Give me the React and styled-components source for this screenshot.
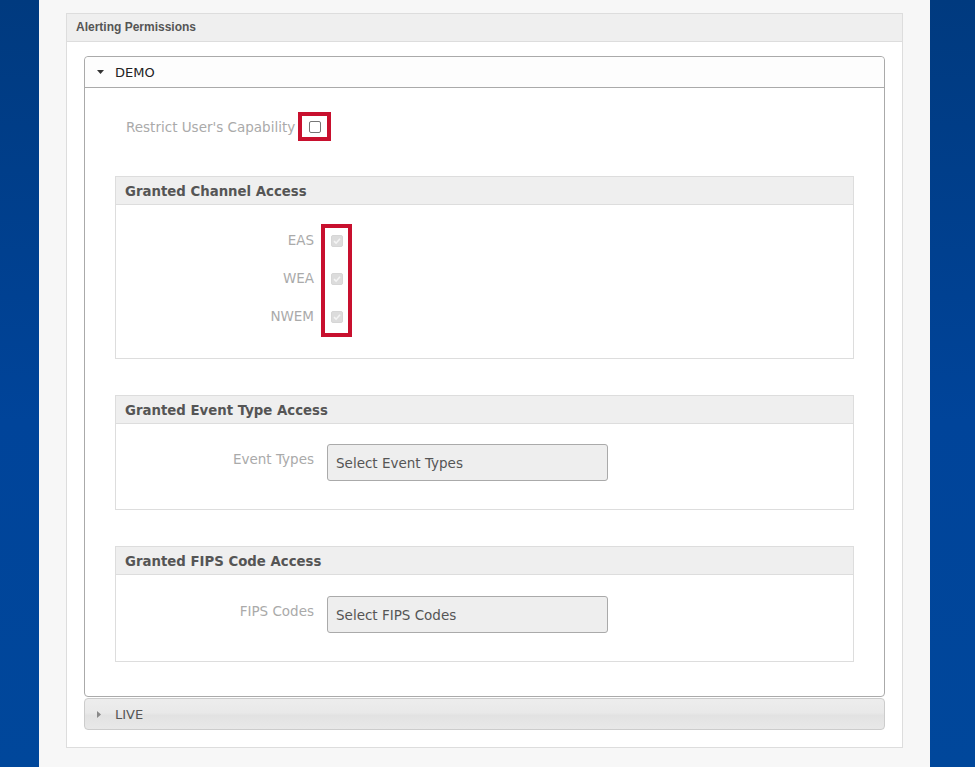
import React from "react";
import styled, { createGlobalStyle } from "styled-components";

const Global = createGlobalStyle`
  html, body { margin: 0; padding: 0; height: 100%; }
  body {
    background: linear-gradient(180deg, #003a7f 0%, #00449a 55%, #00479b 100%);
    font-family: "DejaVu Sans", Verdana, sans-serif;
    overflow: hidden;
  }
`;

const Page = styled.div`
  margin-left: 39px;
  width: 891px;
  min-height: 767px;
  background: #f7f7f7;
  padding: 13px 27px 0;
  box-sizing: border-box;
`;

const Panel = styled.section`
  border: 1px solid #dddddd;
  background: #ffffff;
`;

const PanelHeader = styled.div`
  height: 27px;
  line-height: 26px;
  background: #efefef;
  border-bottom: 1px solid #dddddd;
  padding-left: 9px;
  font-family: "Liberation Sans", Arial, sans-serif;
  font-weight: bold;
  font-size: 12px;
  color: #555555;
`;

const PanelBody = styled.div`
  padding: 14px 17px 17px;
  display: flex;
  flex-direction: column;
  gap: 1px;
`;

const Accordion = styled.div`
  border: 1px solid ${(p) => (p.$open ? "#aaaaaa" : "#cccccc")};
  border-radius: 4px;
  background: ${(p) =>
    p.$open
      ? "#ffffff"
      : "linear-gradient(180deg, #ededed 0%, #e9e9e9 45%, #e2e2e2 55%, #e8e8e8 100%)"};
`;

const AccordionHeader = styled.div`
  height: 30px;
  display: flex;
  align-items: center;
  padding-left: 12px;
  font-size: 13px;
  color: ${(p) => (p.$open ? "#222222" : "#555555")};
  background: ${(p) => (p.$open ? "#fdfdfd" : "transparent")};
  border-bottom: ${(p) => (p.$open ? "1px solid #aaaaaa" : "none")};
  border-radius: 4px 4px 0 0;
`;

const Caret = styled.span`
  width: 18px;
  display: inline-flex;
  align-items: center;
  justify-content: flex-start;
  svg { display: block; }
`;

const AccordionContent = styled.div`
  padding: 24px 30px 34px;
  display: flex;
  flex-direction: column;
`;

const RestrictRow = styled.div`
  display: flex;
  align-items: center;
  padding-left: 11px;
  margin-bottom: 35px;
`;

const Label = styled.span`
  font-size: 13.5px;
  color: #aaaaaa;
`;

const RestrictLabel = styled(Label)`
  margin-right: 3px;
`;

const Highlight = styled.div`
  border: 4px solid #c8102e;
  display: flex;
  flex-direction: column;
  box-sizing: border-box;
`;

const RestrictHighlight = styled(Highlight)`
  width: 33px;
  height: 29px;
  align-items: center;
  justify-content: center;
`;

const ChannelHighlight = styled(Highlight)`
  width: 31px;
  padding: 0 0 3px;
  align-items: center;
`;

const Box = styled.span`
  width: 12px;
  height: 12px;
  box-sizing: border-box;
  border-radius: 2px;
  display: inline-flex;
  align-items: center;
  justify-content: center;
  border: 1px solid ${(p) => (p.$disabled ? "#d6d6d6" : "#767676")};
  background: ${(p) => (p.$disabled ? "#dcdcdc" : "#ffffff")};
  svg { display: block; }
`;

const Checkbox = ({ checked, disabled }) => (
  <Box $disabled={disabled} role="checkbox" aria-checked={checked}>
    {checked && (
      <svg width="8" height="8" viewBox="0 0 8 8">
        <path d="M1 4.2 L3.1 6.2 L7 1.8" fill="none" stroke="#f4f4f4" strokeWidth="1.6" />
      </svg>
    )}
  </Box>
);

const Section = styled.div`
  border: 1px solid #dddddd;
  margin-bottom: ${(p) => (p.$last ? "0" : "36px")};
`;

const SectionHeader = styled.div`
  height: 27px;
  box-sizing: content-box;
  line-height: 29px;
  background: #efefef;
  border-bottom: 1px solid #dddddd;
  padding-left: 9px;
  font-weight: bold;
  font-size: 13.3px;
  color: #555555;
  overflow: hidden;
`;

const SectionBody = styled.div`
  display: flex;
  align-items: flex-start;
  padding: ${(p) => p.$pad};
`;

const LabelColumn = styled.div`
  width: 198px;
  display: flex;
  flex-direction: column;
  align-items: flex-end;
  margin-right: ${(p) => p.$gap}px;
  padding-top: ${(p) => p.$top || 0}px;
`;

const ChannelLabel = styled(Label)`
  height: 26px;
  line-height: 26px;
  margin-bottom: 12px;
  &:last-child { margin-bottom: 0; }
`;

const CheckRow = styled.div`
  height: 26px;
  display: flex;
  align-items: center;
  margin-bottom: 12px;
  &:last-child { margin-bottom: 0; }
`;

const FieldLabel = styled(Label)`
  padding-top: 7px;
`;

const Select = styled.div`
  width: 281px;
  height: 37px;
  box-sizing: border-box;
  background: #eeeeee;
  border: 1px solid #aaaaaa;
  border-radius: 3px;
  padding-left: 8px;
  display: flex;
  align-items: center;
  font-size: 13.5px;
  color: #555555;
  padding-top: 1px;
`;

const DownCaret = () => (
  <svg width="7" height="4" viewBox="0 0 7 4">
    <path d="M0 0 H7 L3.5 4 Z" fill="#333" />
  </svg>
);

const RightCaret = () => (
  <svg width="4" height="7" viewBox="0 0 4 7">
    <path d="M0 0 V7 L4 3.5 Z" fill="#888" />
  </svg>
);

const channels = ["EAS", "WEA", "NWEM"];

export default function App() {
  return (
    <>
      <Global />
      <Page>
        <Panel>
          <PanelHeader>Alerting Permissions</PanelHeader>
          <PanelBody>
            <Accordion $open>
              <AccordionHeader $open>
                <Caret>
                  <DownCaret />
                </Caret>
                DEMO
              </AccordionHeader>
              <AccordionContent>
                <RestrictRow>
                  <RestrictLabel>Restrict User's Capability</RestrictLabel>
                  <RestrictHighlight>
                    <Checkbox />
                  </RestrictHighlight>
                </RestrictRow>

                <Section>
                  <SectionHeader>Granted Channel Access</SectionHeader>
                  <SectionBody $pad="19px 0 21px">
                    <LabelColumn $gap={7} $top={3}>
                      {channels.map((c) => (
                        <ChannelLabel key={c}>{c}</ChannelLabel>
                      ))}
                    </LabelColumn>
                    <ChannelHighlight>
                      {channels.map((c) => (
                        <CheckRow key={c}>
                          <Checkbox checked disabled />
                        </CheckRow>
                      ))}
                    </ChannelHighlight>
                  </SectionBody>
                </Section>

                <Section>
                  <SectionHeader>Granted Event Type Access</SectionHeader>
                  <SectionBody $pad="20px 0 28px">
                    <LabelColumn $gap={13}>
                      <FieldLabel>Event Types</FieldLabel>
                    </LabelColumn>
                    <Select>Select Event Types</Select>
                  </SectionBody>
                </Section>

                <Section $last>
                  <SectionHeader>Granted FIPS Code Access</SectionHeader>
                  <SectionBody $pad="21px 0 28px">
                    <LabelColumn $gap={13}>
                      <FieldLabel>FIPS Codes</FieldLabel>
                    </LabelColumn>
                    <Select>Select FIPS Codes</Select>
                  </SectionBody>
                </Section>
              </AccordionContent>
            </Accordion>
            <Accordion>
              <AccordionHeader>
                <Caret>
                  <RightCaret />
                </Caret>
                LIVE
              </AccordionHeader>
            </Accordion>
          </PanelBody>
        </Panel>
      </Page>
    </>
  );
}
